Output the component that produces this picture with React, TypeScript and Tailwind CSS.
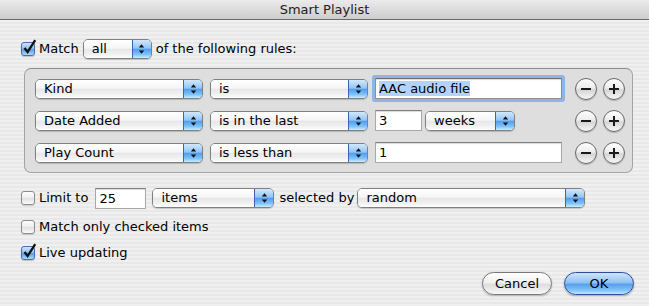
import React from "react";

const Check = ({ on }: { on?: boolean }) => (
  <div className="relative w-[14px] h-[14px] shrink-0">
    <div
      className={
        on
          ? "w-full h-full rounded-[3px] border border-[#4a6ea8] bg-[linear-gradient(#cde4fb,#8fc0f3_45%,#5c9ee9_55%,#a9d8fd)] shadow-[0_1px_1px_rgba(0,0,0,0.2)]"
          : "w-full h-full rounded-[3px] border border-[#8c8c8c] bg-[linear-gradient(#fdfdfd,#efefef_45%,#e1e1e1_55%,#fbfbfb)] shadow-[0_1px_1px_rgba(0,0,0,0.15)]"
      }
    />
    {on && (
      <svg className="absolute left-[1px] top-[-3px]" width="15" height="16" viewBox="0 0 15 16">
        <path d="M2.5 9 L5.6 13 L13.2 1.2" stroke="#111" strokeWidth="2.3" fill="none" />
      </svg>
    )}
  </div>
);

const Arrows = () => (
  <svg width="7" height="12" viewBox="0 0 7 12">
    <polygon points="0.8,4.6 3.5,1.2 6.2,4.6" fill="#111" />
    <polygon points="0.8,7.4 3.5,10.8 6.2,7.4" fill="#111" />
  </svg>
);

const Popup = ({ label, w }: { label: string; w: string }) => (
  <div
    className={`${w} h-[20px] shrink-0 flex rounded-[5px] border border-[#808080] overflow-hidden shadow-[0_1px_1px_rgba(0,0,0,0.18)]`}
  >
    <div className="flex-1 pl-[8px] leading-[18px] bg-[linear-gradient(#ffffff,#f5f5f5_45%,#e7e7e7_52%,#f1f1f1_80%,#ffffff)]">
      {label}
    </div>
    <div className="w-[19px] flex items-center justify-center border-l border-[#3d66b0] bg-[linear-gradient(#d2e8fd,#93c5f6_45%,#559ded_52%,#7ec2fb_80%,#c8eeff)]">
      <Arrows />
    </div>
  </div>
);

const Field = ({ value, w, focused }: { value: string; w: string; focused?: boolean }) => (
  <div
    className={
      focused
        ? `${w} h-[21px] shrink-0 bg-white border border-[#8f8f8f] border-t-[#6f6f6f] pl-[3px] leading-[19px] shadow-[inset_0_1px_1px_rgba(0,0,0,0.15),0_0_0_3px_#8eb5e6] rounded-[1px]`
        : `${w} h-[21px] shrink-0 bg-white border border-[#a8a8a8] border-t-[#7f7f7f] pl-[3px] leading-[19px] shadow-[inset_0_1px_1px_rgba(0,0,0,0.15)]`
    }
  >
    {focused ? <span className="bg-[#b3d3fd]">{value}</span> : value}
  </div>
);

const RoundBtn = ({ plus }: { plus?: boolean }) => (
  <div className="w-[22px] h-[22px] shrink-0 rounded-full border border-[#6a6a6a] bg-[linear-gradient(#ffffff,#ededed_45%,#d5d5d5_55%,#f7f7f7)] shadow-[0_1px_1px_rgba(0,0,0,0.2)] flex items-center justify-center">
    <svg width="12" height="12" viewBox="0 0 12 12">
      <rect x="1" y="5" width="10" height="2" fill="#1a1a1a" />
      {plus && <rect x="5" y="1" width="2" height="10" fill="#1a1a1a" />}
    </svg>
  </div>
);

const Rule = ({ field, op, children }: { field: string; op: string; children: React.ReactNode }) => (
  <div className="flex items-center h-[21px]">
    <Popup label={field} w="w-[168px]" />
    <Popup label={op} w="w-[158px] ml-[7px]" />
    <div className="w-[187px] ml-[7px] flex items-center">{children}</div>
    <div className="ml-[13px] flex gap-[6px]">
      <RoundBtn />
      <RoundBtn plus />
    </div>
  </div>
);

export default function App() {
  return (
    <div className="w-[649px] h-[306px] flex flex-col font-['DejaVu_Sans',sans-serif] text-[13px] text-black bg-[repeating-linear-gradient(180deg,#f0f0f0_0px,#f0f0f0_2px,#e8e8e8_2px,#e8e8e8_4px)]">
      <div className="h-[20px] shrink-0 border-b border-[#6b6b6b] bg-[linear-gradient(#ebebeb,#cdcdcd)] flex items-center justify-center text-[#1c1c1c]">
        Smart Playlist
      </div>

      <div className="flex-1 flex flex-col pl-[21px] pt-[19px]">
        <div className="flex items-center h-[20px]">
          <Check on />
          <span className="ml-[4px]">Match</span>
          <Popup label="all" w="w-[69px] ml-[4px]" />
          <span className="ml-[4px]">of the following rules:</span>
        </div>

        <div className="ml-[3px] mt-[9px] w-[609px] h-[105px] rounded-[7px] border border-[#a4a4a4] border-t-[#8e8e8e] bg-[#dedede] flex flex-col gap-[11px] pl-[10px] pt-[9px]">
          <Rule field="Kind" op="is">
            <Field value="AAC audio file" w="w-[187px]" focused />
          </Rule>
          <Rule field="Date Added" op="is in the last">
            <Field value="3" w="w-[47px]" />
            <Popup label="weeks" w="w-[90px] ml-[3px]" />
          </Rule>
          <Rule field="Play Count" op="is less than">
            <Field value="1" w="w-[187px]" />
          </Rule>
        </div>

        <div className="flex items-center h-[22px] mt-[14px]">
          <Check />
          <span className="ml-[4px]">Limit to</span>
          <Field value="25" w="w-[51px] ml-[7px]" />
          <Popup label="items" w="w-[122px] ml-[6px]" />
          <span className="ml-[5px]">selected by</span>
          <Popup label="random" w="w-[228px] ml-[3px]" />
        </div>

        <div className="flex items-center h-[18px] mt-[9px]">
          <Check />
          <span className="ml-[4px]">Match only checked items</span>
        </div>

        <div className="flex items-center h-[18px] mt-[8px]">
          <Check on />
          <span className="ml-[4px]">Live updating</span>
        </div>

        <div className="mt-auto mb-[11px] pr-[15px] flex justify-end gap-[12px]">
          <div className="w-[70px] h-[23px] rounded-full border border-[#777777] bg-[linear-gradient(#ffffff,#f1f1f1_45%,#dedede_55%,#f7f7f7)] shadow-[0_1px_2px_rgba(0,0,0,0.25)] flex items-center justify-center">
            Cancel
          </div>
          <div className="w-[70px] h-[23px] rounded-full border border-[#2c4f9c] bg-[linear-gradient(#cfe4fb,#91c2f4_45%,#5aa0ec_55%,#86c8fc_85%,#c0ecff)] shadow-[0_1px_2px_rgba(0,0,0,0.3)] flex items-center justify-center">
            OK
          </div>
        </div>
      </div>
    </div>
  );
}
